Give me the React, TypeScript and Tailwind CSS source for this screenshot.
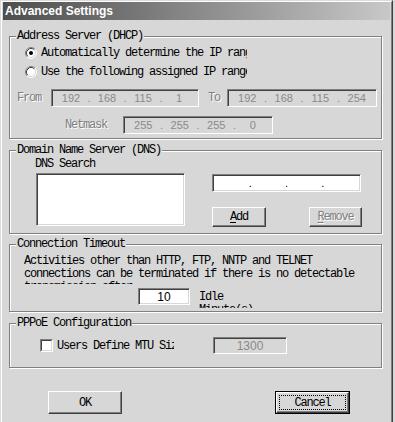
import React from "react";

const mono = "font-['Liberation_Mono',monospace] text-[12px] tracking-[-1.2px] text-black";
const sunken = "border border-t-[#808080] border-l-[#808080] border-b-white border-r-white";
const raised = "border border-t-white border-l-white border-r-[#404040] border-b-[#404040] shadow-[inset_-1px_-1px_0_#808080]";
const group = "border border-[#808080] shadow-[inset_1px_1px_0_#fff,1px_1px_0_#fff]";
const legend = "ml-[6px] px-[1px] leading-[14px] bg-[#d7d7d7]";
const dim = "text-[#808080] [text-shadow:1px_1px_0_#fff]";

function Radio({ on }: { on?: boolean }) {
  return (
    <svg width="12" height="12" viewBox="0 0 12 12" className="shrink-0">
      <circle cx="6" cy="6" r="5" fill="#fff" />
      <path d="M2.11 9.89A5.5 5.5 0 0 1 9.89 2.11" fill="none" stroke="#808080" />
      <path d="M9.89 2.11A5.5 5.5 0 0 1 2.11 9.89" fill="none" stroke="#fff" />
      <path d="M2.82 9.18A4.5 4.5 0 0 1 9.18 2.82" fill="none" stroke="#404040" />
      <path d="M9.18 2.82A4.5 4.5 0 0 1 2.82 9.18" fill="none" stroke="#d7d7d7" />
      {on && <circle cx="6" cy="6" r="2" fill="#000" />}
    </svg>
  );
}

function IpBox({ vals, w, white }: { vals: string[]; w: string; white?: boolean }) {
  return (
    <div
      className={`flex h-[18px] items-center ${w} ${sunken} ${
        white
          ? "bg-white shadow-[inset_1px_1px_0_#404040,inset_-1px_-1px_0_#d7d7d7]"
          : "shadow-[inset_1px_1px_0_#404040]"
      } px-[1px] font-['Liberation_Sans',Arial,sans-serif] text-[11px] text-[#8a8a8a] tracking-normal`}
    >
      {vals.map((v, i) => (
        <React.Fragment key={i}>
          {i > 0 && <span className={`w-0 flex justify-center ${white ? "text-black" : ""}`}>.</span>}
          <span className="flex-1 text-center">{v}</span>
        </React.Fragment>
      ))}
    </div>
  );
}

export default function App() {
  return (
    <div className="w-[395px] h-[422px] bg-[#d7d7d7] overflow-hidden">
      <div className={`w-[393px] h-[424px] border border-t-[#dcdcdc] border-l-[#dcdcdc] border-r-[#404040] border-b-[#404040] ${mono}`}>
        <div className="h-full border border-t-white border-l-white border-r-[#808080] border-b-[#808080]">
          {/* title bar */}
          <div className="ml-[1px] mr-[1px] h-[18px] flex items-center pl-[2px] bg-gradient-to-r from-[#4e4e4e] via-[#8a8a8a] to-[#c8c8c8]">
            <span className="font-['Liberation_Sans',Arial,sans-serif] text-[12px] font-bold text-white tracking-normal">
              Advanced Settings
            </span>
          </div>

          <div className="pl-[7px]">
            {/* DHCP */}
            <fieldset className={`mt-[9px] w-[373px] h-[110px] ${group}`}>
              <legend className={legend}>Address Server (DHCP)</legend>
              <div className="flex h-[19px] items-center gap-[4px] pl-[15px]">
                <Radio on />
                <span className="w-[206px] overflow-hidden whitespace-nowrap">Automatically determine the IP range</span>
              </div>
              <div className="flex h-[19px] items-center gap-[4px] pl-[15px]">
                <Radio />
                <span className="w-[206px] overflow-hidden whitespace-nowrap">Use the following assigned IP range</span>
              </div>
              <div className="mt-[8px] flex h-[18px] items-center">
                <span className={`ml-[7px] w-[34px] ${dim}`}>From</span>
                <IpBox vals={["192", "168", "115", "1"]} w="w-[148px]" />
                <span className={`ml-[9px] w-[19px] ${dim}`}>To</span>
                <IpBox vals={["192", "168", "115", "254"]} w="w-[150px]" />
              </div>
              <div className="mt-[9px] flex h-[18px] items-center">
                <span className={`ml-[55px] w-[58px] ${dim}`}>Netmask</span>
                <IpBox vals={["255", "255", "255", "0"]} w="w-[150px]" />
              </div>
            </fieldset>

            {/* DNS */}
            <fieldset className={`mt-[4px] w-[373px] h-[91px] ${group}`}>
              <legend className={legend}>Domain Name Server (DNS)</legend>
              <div className="flex">
                <div className="pl-[25px]">
                  <div className="leading-[14px]">DNS Search</div>
                  <div className={`mt-[2px] ml-[1px] w-[149px] h-[53px] bg-white ${sunken} shadow-[inset_1px_1px_0_#404040,inset_-1px_-1px_0_#d7d7d7]`} />
                </div>
                <div className="ml-[27px]">
                  <div className="mt-[17px]">
                    <IpBox vals={["", "", "", ""]} w="w-[149px]" white />
                  </div>
                  <div className="mt-[15px] flex">
                    <button className={`w-[54px] h-[20px] bg-[#d7d7d7] ${raised}`}>
                      <span className="underline underline-offset-2">A</span>dd
                    </button>
                    <button className={`ml-[43px] w-[53px] h-[20px] bg-[#d7d7d7] ${raised} ${dim}`}>
                      <span className="underline underline-offset-2">R</span>emove
                    </button>
                  </div>
                </div>
              </div>
            </fieldset>

            {/* Timeout */}
            <fieldset className={`mt-[3px] w-[373px] h-[75px] ${group}`}>
              <legend className={legend}>Connection Timeout</legend>
              <div className="mt-[4px] ml-[14px] w-[340px] h-[29px] overflow-hidden leading-[13px]">
                Activities other than HTTP, FTP, NNTP and TELNET connections can be terminated if there is no detectable transmission after
              </div>
              <div className="mt-[4px] flex items-start">
                <div className={`ml-[128px] w-[52px] h-[17px] bg-white ${sunken} shadow-[inset_1px_1px_0_#404040,inset_-1px_-1px_0_#d7d7d7] flex items-center justify-center font-['Liberation_Sans',Arial,sans-serif] text-[12px] tracking-normal`}>
                  10
                </div>
                <div className="ml-[9px] mt-[3px] h-[17px] overflow-hidden leading-[13px] whitespace-nowrap">
                  Idle
                  <br />
                  Minute(s)
                </div>
              </div>
            </fieldset>

            {/* PPPoE */}
            <fieldset className={`mt-[4px] w-[373px] h-[52px] ${group}`}>
              <legend className={legend}>PPPoE Configuration</legend>
              <div className="mt-[7px] flex h-[17px] items-center">
                <div className={`ml-[30px] w-[13px] h-[13px] ${sunken}`}>
                  <div className="h-full w-full bg-white border border-t-[#404040] border-l-[#404040] border-b-[#d7d7d7] border-r-[#d7d7d7]" />
                </div>
                <span className="ml-[4px] w-[117px] overflow-hidden whitespace-nowrap">Users Define MTU Size</span>
                <div className={`ml-[39px] w-[74px] h-[17px] ${sunken} shadow-[inset_1px_1px_0_#404040] flex items-center justify-center font-['Liberation_Sans',Arial,sans-serif] text-[12px] tracking-normal text-[#8a8a8a]`}>
                  1300
                </div>
              </div>
            </fieldset>
          </div>

          {/* buttons */}
          <div className="mt-[23px] flex">
            <button className={`ml-[46px] w-[74px] h-[23px] bg-[#d7d7d7] ${raised}`}>OK</button>
            <div className="ml-[153px] w-[75px] h-[23px] border border-black">
              <button className={`w-full h-full bg-[#d7d7d7] ${raised} p-[2px]`}>
                <div className="h-full w-full border border-dotted border-black flex items-center justify-center">Cancel</div>
              </button>
            </div>
          </div>
        </div>
      </div>
    </div>
  );
}
